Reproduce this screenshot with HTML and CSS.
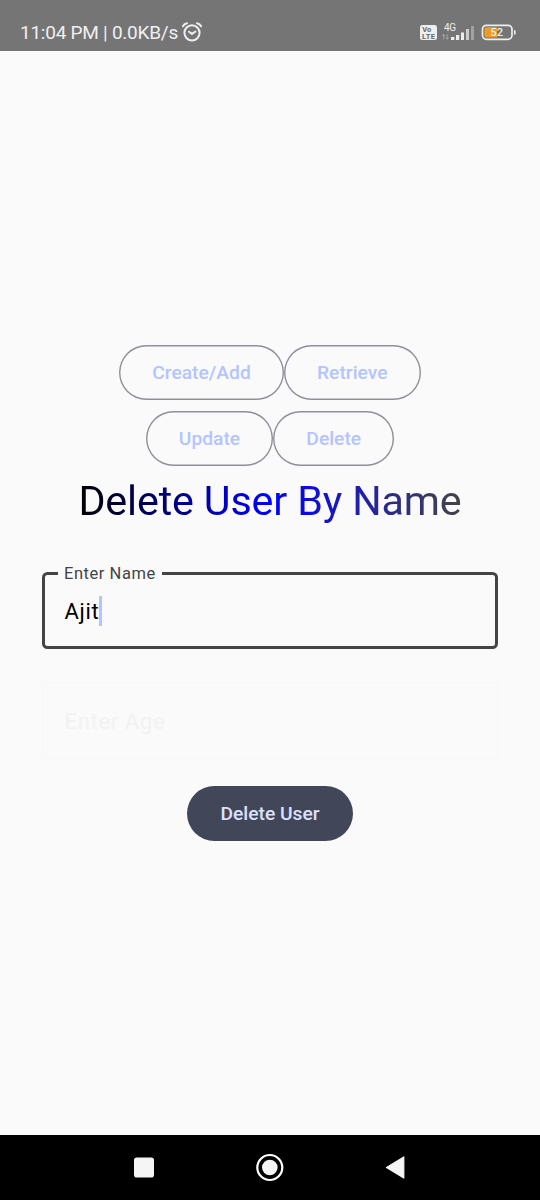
FILE: index.html
```html
<!DOCTYPE html>
<html lang="en">
<head>
<meta charset="utf-8">
<title>Delete User</title>
<link rel="stylesheet" href="styles.css">
</head>
<body>
<header class="status">
  <span class="clock">11:04 PM | 0.0KB/s</span>
  <svg class="alarm" width="22" height="22" viewBox="0 0 22 22" fill="none" stroke="#eee" stroke-width="2" stroke-linecap="round">
    <circle cx="11" cy="11.8" r="7.6"/>
    <path d="M1.9 5.3Q3 3 6 2.3M20.1 5.3Q19 3 16 2.3M8 10.7l3 2.2 3.5-2.4"/>
  </svg>
  <svg class="indicators" width="100" height="24" viewBox="0 0 100 24">
    <rect x="1" y="5" width="17" height="15" rx="2.5" fill="#eee"/>
    <g class="volte"><text x="3.2" y="11.9" textLength="9">Vo</text><text x="3" y="18.8" textLength="13">LTE</text></g>
    <text class="network" x="25" y="10.5" textLength="12">4G</text>
    <path d="M24.7 19.5v-5M23.2 16l1.5-1.7 1.5 1.7M28.2 14.3v5M26.8 17.5l1.4 1.7 1.4-1.7" fill="none" stroke="#aaa" stroke-width=".9"/>
    <path d="M32 17h3.4v3H32zM37 15h3.2v5H37zM42 12.5h3v7.5h-3z" fill="#eee"/>
    <path d="M47 9h3v11h-3z" fill="#ccc"/><path d="M52 6h3v14h-3z" fill="#a2a2a2"/>
    <rect x="63.5" y="5.3" width="29.5" height="14" rx="4" fill="none" stroke="#eee" stroke-width="1.7"/>
    <path d="M67.5 7.2h10.5v10.2H67.5q-2 0-2-2V9.2q0-2 2-2z" fill="#f69a1b"/>
    <path d="M95 10h.5q1.2 0 1.2 2.4t-1.2 2.4H95z" fill="#eee"/>
    <text class="charge" x="71.5" y="16.2" textLength="12.5">52</text>
  </svg>
</header>
<main class="screen">
  <div class="row">
    <button class="outlined create">Create/Add</button>
    <button class="outlined retrieve">Retrieve</button>
  </div>
  <div class="row">
    <button class="outlined update">Update</button>
    <button class="outlined delete">Delete</button>
  </div>
  <h1 class="title">Delete User By Name</h1>
  <div class="field">
    <span class="field-label">Enter Name</span>
    <span class="field-value">Ajit</span><span class="cursor"></span>
  </div>
  <div class="field disabled"><span class="field-value">Enter Age</span></div>
  <button class="filled">Delete User</button>
</main>
<nav class="navbar">
  <svg width="540" height="65" viewBox="0 0 540 65" fill="#f5f5f5">
    <rect x="134" y="22.5" width="20" height="20" rx="2.8"/>
    <circle cx="269.8" cy="32.5" r="12.5" fill="none" stroke="#fff" stroke-width="2.2"/>
    <circle cx="269.8" cy="32.5" r="7.8"/>
    <path d="M386.5 32.5 403.8 21.9v21.2z" stroke="#f5f5f5" stroke-width="1.2" stroke-linejoin="round"/>
  </svg>
</nav>
</body>
</html>
```
FILE: styles.css
```css
* { box-sizing: border-box; }
body {
  margin: 0;
  width: 540px;
  height: 1200px;
  display: flex;
  flex-direction: column;
  background: #fafafa;
  font-family: Roboto, sans-serif;
}
.status {
  height: 51px;
  padding: 20px 21px 0 20px;
  display: flex;
  align-items: flex-start;
  background: #757575;
  color: #f0f0f0;
}
.clock { font-size: 19px; line-height: 26px; letter-spacing: -.25px; white-space: nowrap; }
.alarm { margin: 1px 0 0 3px; }
.indicators { margin-left: auto; }
.indicators text { fill: #eee; }
.indicators .volte text { fill: #666; font-size: 7.5px; font-weight: 700; }
.indicators .network { font-size: 10px; }
.indicators .charge { font-size: 11px; font-weight: 500; }
.screen {
  flex: 1;
  padding-top: 293.5px;
  display: flex;
  flex-direction: column;
  align-items: center;
}
.row { display: flex; height: 55px; margin-bottom: 11px; }
button {
  height: 55px;
  padding: 0;
  border: 0;
  border-radius: 28px;
  font: 500 19.25px/27px Roboto, sans-serif;
  letter-spacing: 0;
}
.outlined {
  box-shadow: inset 0 0 0 1.4px #8f9099;
  background: transparent;
  color: #b4c4ff;
}
.create { width: 164.5px; }
.retrieve { width: 137px; }
.update { width: 127.5px; }
.delete { width: 121px; }
.title {
  margin: 0;
  font-size: 41.25px;
  font-weight: 400;
  line-height: 48px;
  letter-spacing: -.15px;
  white-space: nowrap;
  background: linear-gradient(90deg, #000, #00f 50%, #444);
  -webkit-background-clip: text;
  background-clip: text;
  color: transparent;
}
.field {
  position: relative;
  width: 456px;
  height: 77px;
  margin: 47.5px 0 0;
  padding: 2px 0 0 19.5px;
  display: flex;
  align-items: center;
  border: 3px solid #444446;
  border-radius: 5.5px;
  color: #000;
}
.field-value { font-size: 22px; line-height: 33px; letter-spacing: .69px; }
.field-label {
  position: absolute;
  left: 13px;
  top: -12px;
  padding: 0 6px;
  background: #fafafa;
  color: #444446;
  font-size: 16.5px;
  line-height: 22px;
  letter-spacing: .55px;
}
.cursor { width: 3px; height: 30px; margin: 0 0 1px -.5px; background: #b4c4ff; }
.disabled {
  margin-top: 33px;
  border: 1px solid #f7f7f7;
  padding-left: 21.5px;
  color: #f2f2f2;
}
.filled {
  width: 165.5px;
  margin-top: 27px;
  background: #424659;
  color: #dce1ff;
}
.navbar { height: 65px; background: #000; }
.navbar svg { display: block; }
```
